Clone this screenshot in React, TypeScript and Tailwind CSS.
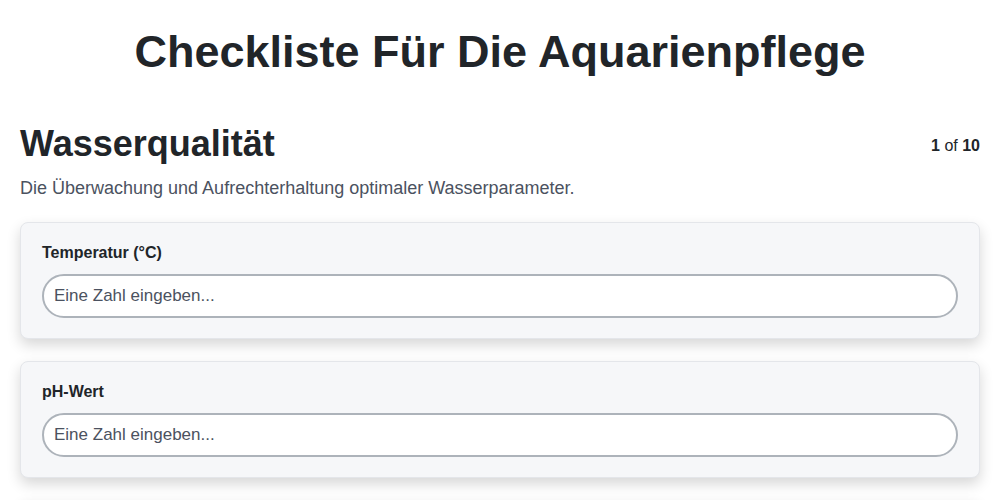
import React from "react";

const fields = ["Temperatur (°C)", "pH-Wert", "Ammoniak (ppm)"];

export default function App() {
  return (
    <div className="min-h-screen bg-white text-[#212529]" style={{ fontFamily: '"Liberation Sans", Arial, sans-serif' }}>
      <h1 className="pt-[25px] text-center text-[45px] font-bold leading-[54px] text-[#212529]">
        Checkliste Für Die Aquarienpflege
      </h1>
      <div className="mt-[45px] px-5">
        <div className="flex items-start justify-between">
          <h2 className="text-[36px] font-bold leading-[40px] text-[#212529]">Wasserqualität</h2>
          <div className="pt-[12px] text-base leading-[20px] text-[#212529]">
            <span className="font-bold">1</span> of <span className="font-bold">10</span>
          </div>
        </div>
        <p className="mt-[10px] text-[18px] leading-7 text-[#4b5260]">
          Die Überwachung und Aufrechterhaltung optimaler Wasserparameter.
        </p>
        <div className="mt-[20px] flex flex-col gap-[22px]">
          {fields.map((f) => (
            <div
              key={f}
              className="rounded-lg border border-[#e4e6ea] bg-[#f6f7f9] px-[21px] py-5 shadow-[0_6px_14px_rgba(0,0,0,0.16)]"
            >
              <label className="mb-[11px] block text-base font-bold leading-5 text-[#212529]">{f}</label>
              <input
                type="text"
                placeholder="Eine Zahl eingeben..."
                className="block h-11 w-full rounded-full border-2 border-[#adb3ba] bg-white px-[10px] text-[17px] text-[#212529] outline-none placeholder:text-[#4b5260]"
              />
            </div>
          ))}
        </div>
      </div>
    </div>
  );
}
